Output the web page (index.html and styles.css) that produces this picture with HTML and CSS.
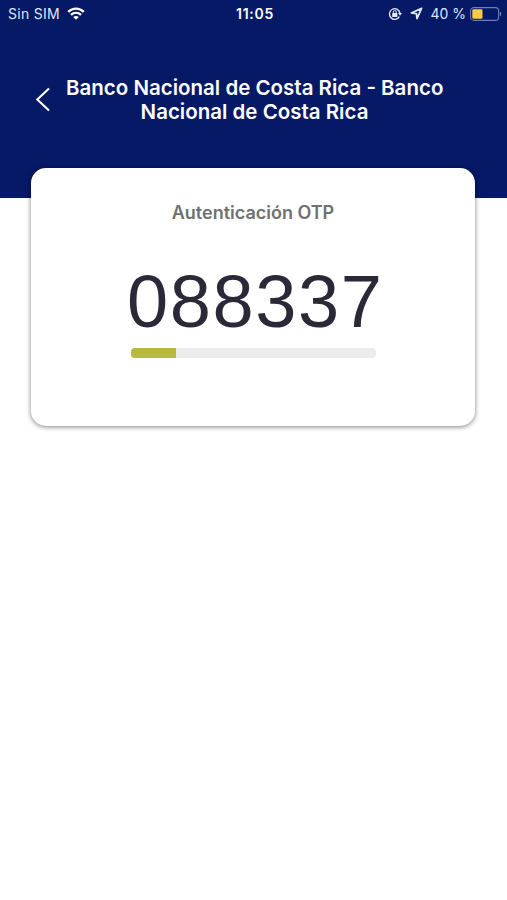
FILE: index.html
```html
<!DOCTYPE html>
<html lang="es">
<head>
    <meta charset="UTF-8">
    <meta name="viewport" content="width=device-width, initial-scale=1.0">
    <title>Autenticación OTP</title>
    <link rel="stylesheet" href="styles.css">
</head>
<body>
    <header class="header">
        <div class="status-bar">
            <div class="status-left">
                <span class="carrier">Sin SIM</span>
                <svg class="wifi" width="18" height="13" viewBox="0 0 18 13" fill="none" stroke="#fff" stroke-width="2.3">
                    <path d="M1.2 4.9C5.6.6 12.4.6 16.8 4.9"/>
                    <path d="M4 7.9c2.9-2.7 7.1-2.7 10 0"/>
                    <path d="M6.2 10.1c1.7-1.4 3.9-1.4 5.6 0L9 12.8z" fill="#fff" stroke="none"/>
                </svg>
            </div>
            <span class="time">11:05</span>
            <div class="status-right">
                <svg class="lock" width="14" height="14" viewBox="0 0 14 14" fill="none" stroke="#e4e9fb" stroke-width="1.3">
                    <path d="M11.4 9.6A5.3 5.3 0 1 1 12 6.2"/>
                    <path d="M10 6h4L12 8.8z" fill="#e4e9fb" stroke="none"/>
                    <rect x="4.2" y="6.1" width="5.2" height="3.9" rx=".6" fill="#e4e9fb" stroke="none"/>
                    <path d="M5.3 6.3V5a1.5 1.5 0 0 1 3 0v1.3" stroke-width="1"/>
                </svg>
                <svg class="location" width="13" height="13" viewBox="0 0 13 13" fill="none" stroke="#e4e9fb" stroke-width="1.7" stroke-linejoin="round">
                    <path d="M11.6 1.4 1.3 6l5.1.6.6 5.1z"/>
                </svg>
                <span class="percent">40 %</span>
                <svg class="battery" width="32" height="14" viewBox="0 0 32 14">
                    <rect x=".6" y=".6" width="28" height="12.8" rx="3.2" fill="none" stroke="#6f7fb3" stroke-width="1.1"/>
                    <rect x="2.3" y="2.3" width="10.2" height="9.4" rx="1.3" fill="#fbcb45"/>
                    <path d="M29.9 4.7c1.8.5 1.8 4.1 0 4.6z" fill="#7d8bbb"/>
                </svg>
            </div>
        </div>
        <div class="nav">
            <svg class="back" width="16" height="26" viewBox="0 0 16 26" fill="none" stroke="#fff" stroke-width="2.1">
                <path d="M14 1.5 2.3 12.5 14 23.5"/>
            </svg>
            <h1 class="title">Banco Nacional de Costa Rica - Banco<br>Nacional de Costa Rica</h1>
        </div>
    </header>

    <main class="card">
        <h2 class="label">Autenticación OTP</h2>
        <div class="code">088337</div>
        <div class="progress">
            <div class="progress-bar" style="width: 18.4%"></div>
        </div>
    </main>
</body>
</html>
```
FILE: styles.css
```css
* {
    box-sizing: border-box;
}
body {
    margin: 0;
    min-height: 900px;
    background: #fff;
    font-family: Inter, "Liberation Sans", sans-serif;
}
h1, h2 {
    margin: 0;
}
svg {
    display: block;
    flex: none;
}
.header {
    height: 198px;
    background: #051966;
    color: #fff;
}
.status-bar {
    display: grid;
    grid-template-columns: 1fr auto 1fr;
    align-items: center;
    height: 27px;
    padding: 0 5px 0 8px;
    font-size: 14px;
}
.status-left, .status-right {
    display: flex;
    align-items: center;
    color: #dfe5fa;
}
.status-left {
    gap: 7px;
}
.status-right {
    justify-content: flex-end;
}
.carrier {
    letter-spacing: 0.3px;
}
.time {
    font-weight: 600;
    letter-spacing: 0.7px;
}
.location {
    margin-left: 8px;
}
.percent {
    margin: 0 4px 0 7px;
    white-space: nowrap;
}
.nav {
    display: flex;
    align-items: center;
    padding: 49px 0 0 35px;
}
.title {
    width: 377px;
    margin-left: 15px;
    font-size: 20.5px;
    font-weight: 600;
    line-height: 24px;
    text-align: center;
    white-space: nowrap;
}
.card {
    width: 444px;
    height: 258px;
    margin: -30px 0 0 31px;
    padding-top: 33px;
    background: #fff;
    border-radius: 15px;
    box-shadow: 0 1px 5px rgba(0, 0, 0, 0.5);
    position: relative;
}
.label {
    color: #707070;
    font-size: 18px;
    font-weight: 600;
    line-height: 24px;
    text-align: center;
}
.code {
    margin: 37px 0 0 96px;
    color: #2b2938;
    font-family: "Liberation Sans", Arial, sans-serif;
    font-size: 74px;
    line-height: 80px;
    letter-spacing: 1.6px;
}
.progress {
    width: 245px;
    height: 10px;
    margin: 6px 0 0 100px;
    background: #ececec;
    border-radius: 4px;
    overflow: hidden;
}
.progress-bar {
    height: 100%;
    background: #b7ba3c;
}
```
